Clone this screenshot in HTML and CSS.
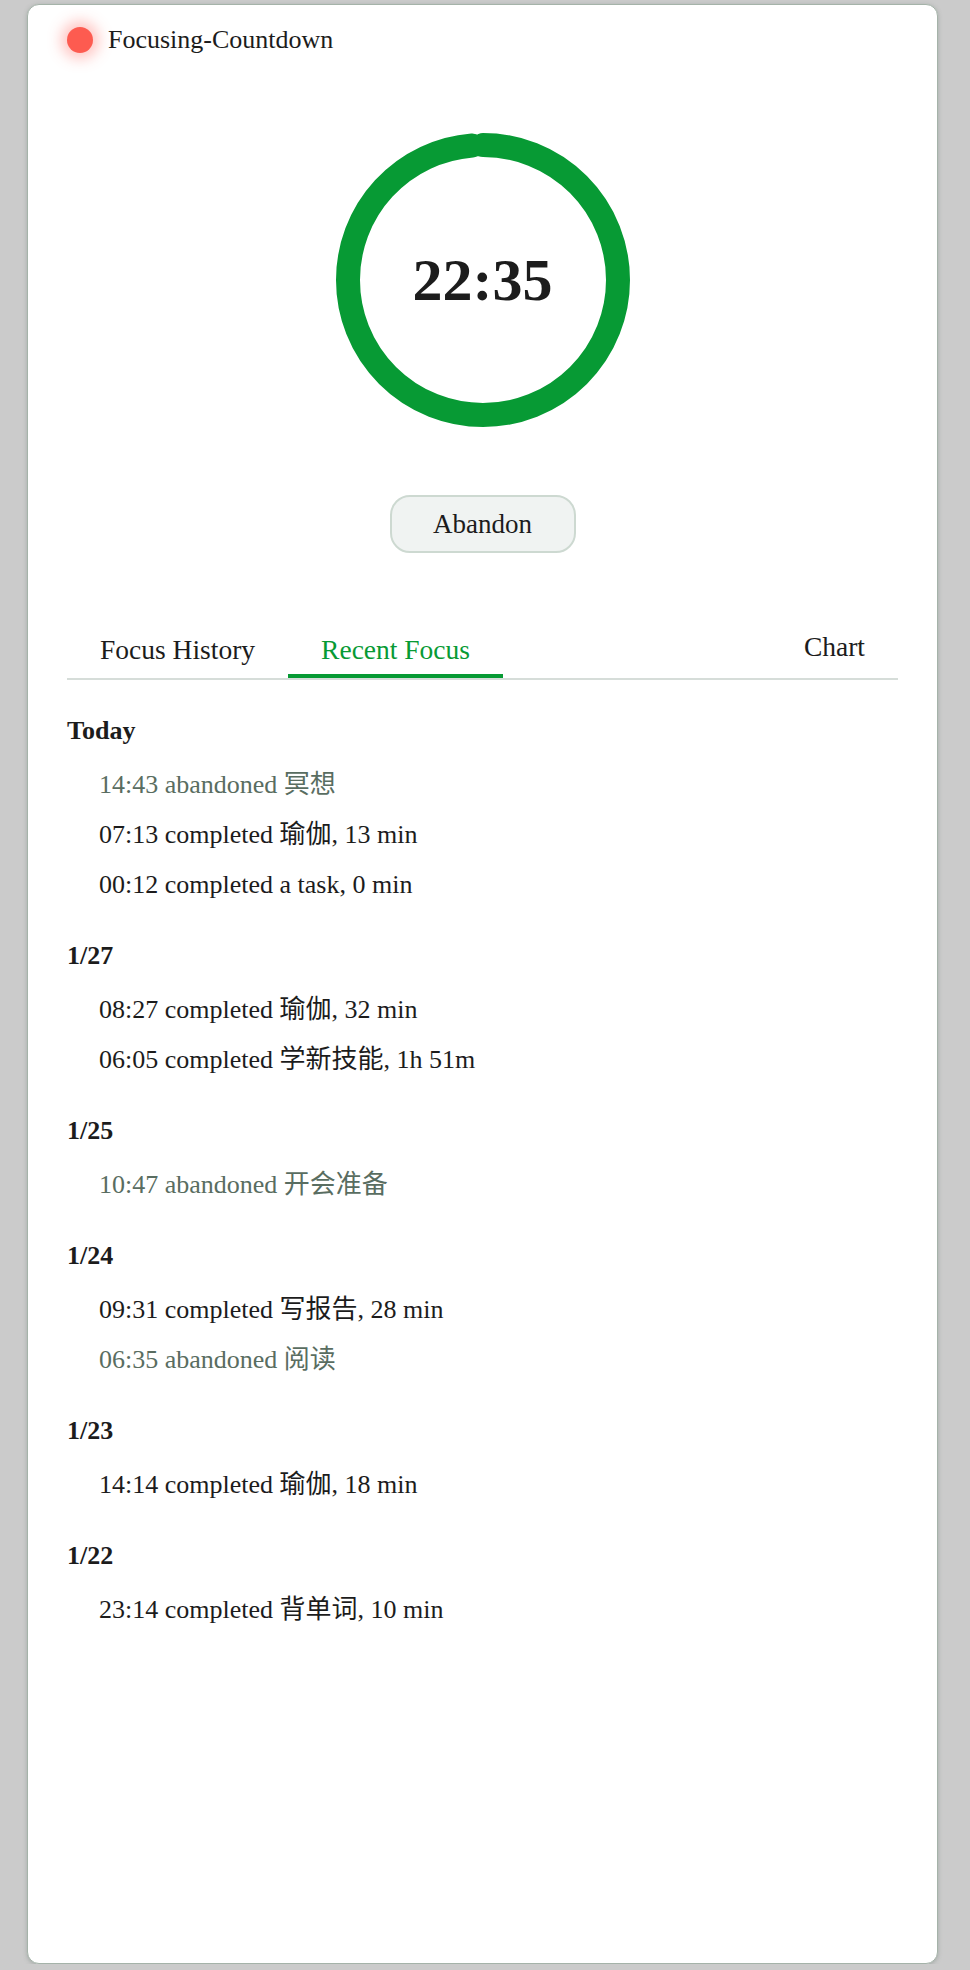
FILE: index.html
```html
<!DOCTYPE html>
<html lang="en">
<head>
  <meta charset="UTF-8" />
  <meta name="viewport" content="width=device-width, initial-scale=1.0" />
  <title>Focusing-Countdown</title>
  <link rel="stylesheet" href="styles.css">
</head>
<body>
  <div class="window">
    <div class="titlebar">
      <span class="dot"></span>
      <span class="title">Focusing-Countdown</span>
    </div>

    <div class="timer">
      <svg class="ring" width="294" height="294" viewBox="0 0 294 294">
        <circle cx="147" cy="147" r="135" fill="none" stroke="#079a34" stroke-width="24"
                stroke-linecap="round" stroke-dasharray="837 848"
                transform="rotate(-90 147 147)" />
      </svg>
      <div class="time">22:35</div>
    </div>

    <button class="abandon">Abandon</button>

    <div class="tabs">
      <div class="tab">Focus History</div>
      <div class="tab active">Recent Focus</div>
      <div class="tab chart">Chart</div>
    </div>

    <div class="history">
      <div class="day">
        <h3>Today</h3>
        <div class="item abandoned">14:43 abandoned 冥想</div>
        <div class="item">07:13 completed 瑜伽, 13 min</div>
        <div class="item">00:12 completed a task, 0 min</div>
      </div>
      <div class="day">
        <h3>1/27</h3>
        <div class="item">08:27 completed 瑜伽, 32 min</div>
        <div class="item">06:05 completed 学新技能, 1h 51m</div>
      </div>
      <div class="day">
        <h3>1/25</h3>
        <div class="item abandoned">10:47 abandoned 开会准备</div>
      </div>
      <div class="day">
        <h3>1/24</h3>
        <div class="item">09:31 completed 写报告, 28 min</div>
        <div class="item abandoned">06:35 abandoned 阅读</div>
      </div>
      <div class="day">
        <h3>1/23</h3>
        <div class="item">14:14 completed 瑜伽, 18 min</div>
      </div>
      <div class="day">
        <h3>1/22</h3>
        <div class="item">23:14 completed 背单词, 10 min</div>
      </div>
    </div>
  </div>
</body>
</html>
```

FILE: styles.css
```css
body {
  margin: 0;
  padding: 4px 0 0 27px;
  background-color: #cbcbcb;
  font-family: "Liberation Serif", "Noto Sans CJK SC", serif;
  color: #1c1c1c;
}

.window {
  box-sizing: border-box;
  width: 911px;
  height: 1960px;
  background-color: #fff;
  border: 1px solid #a5b3a9;
  border-radius: 12px;
  box-shadow: 0 1px 4px rgba(90, 110, 98, 0.35);
  padding: 0 39px;
}

.titlebar {
  display: flex;
  align-items: center;
  height: 70px;
}

.dot {
  width: 26px;
  height: 26px;
  border-radius: 50%;
  background-color: #fd5b50;
  box-shadow: 0 0 14px 6px rgba(255, 90, 80, 0.35);
  margin-right: 15px;
}

.title {
  font-size: 26px;
}

.timer {
  display: grid;
  justify-content: center;
  align-items: center;
  margin-top: 58px;
}

.ring,
.time {
  grid-area: 1 / 1;
}

.ring {
  display: block;
}

.time {
  text-align: center;
  font-size: 60px;
  font-weight: bold;
}

.abandon {
  display: block;
  margin: 68px auto 0;
  width: 186px;
  height: 58px;
  font-family: inherit;
  font-size: 27px;
  color: #1c1c1c;
  background-color: #f0f3f2;
  border: 2px solid #cdd9d1;
  border-radius: 20px;
}

.tabs {
  display: flex;
  align-items: flex-end;
  margin-top: 68px;
  border-bottom: 2px solid #d6ddd9;
}

.tab {
  font-size: 27.5px;
  line-height: 32px;
  padding: 10px 33px 8px;
  border-bottom: 4px solid transparent;
}

.tab.active {
  color: #079a34;
  border-bottom-color: #079a34;
}

.tab.chart {
  margin-left: auto;
  padding-bottom: 11px;
}

.history {
  margin-top: 36px;
}

.day {
  margin-bottom: 31px;
}

.day h3 {
  margin: 0 0 14px;
  font-size: 26px;
  line-height: 30px;
}

.item {
  font-size: 26px;
  line-height: 50px;
  padding-left: 32px;
}

.item.abandoned {
  color: #596d61;
}
```
